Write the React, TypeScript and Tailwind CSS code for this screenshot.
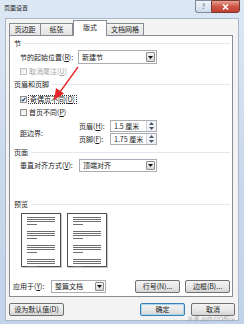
import React from 'react';

const DownArrow = () => (
  <svg width="5" height="3" viewBox="0 0 5 3">
    <path d="M0 0h5L2.5 3z" fill="#111" />
  </svg>
);

const UpArrow = () => (
  <svg width="5" height="3" viewBox="0 0 5 3">
    <path d="M0 3h5L2.5 0z" fill="#4a5870" />
  </svg>
);

const Checkbox = ({ checked = false, disabled = false }: { checked?: boolean; disabled?: boolean }) => (
  <span
    className={`flex h-[7px] w-[7px] shrink-0 items-center justify-center border bg-gradient-to-br from-[#e6e6e6] to-white ${
      disabled ? 'border-[#c2c2c2]' : 'border-[#8e8f8f]'
    }`}
  >
    {checked && (
      <svg width="5" height="5" viewBox="0 0 5 5">
        <path d="M0.6 2.6 L1.9 3.9 L4.4 0.8" stroke="#21427a" strokeWidth="1.1" fill="none" />
      </svg>
    )}
  </span>
);

const SectionHeader = ({ label }: { label: string }) => (
  <div className="flex h-[9px] items-center gap-[3px] pl-[4px] pr-[2px]">
    <span>{label}</span>
    <div className="h-px flex-1 bg-[#e2e8ef]" />
  </div>
);

const ComboBox = ({ value, className }: { value: string; className: string }) => (
  <div className={`flex border border-[#abadb3] bg-white ${className}`}>
    <span className="flex flex-1 items-center pl-[3px]">{value}</span>
    <span className="m-px flex w-[9px] items-center justify-center rounded-[1px] border border-[#8c8c8c] bg-gradient-to-b from-[#f4f4f4] to-[#d8d8d8]">
      <DownArrow />
    </span>
  </div>
);

const SpinBox = ({ value }: { value: string }) => (
  <div className="flex h-[12px] w-[47px] border border-[#abadb3] bg-white">
    <span className="flex flex-1 items-center pl-[3px]">{value}</span>
    <span className="flex w-[10px] flex-col border-l border-[#d0d4da]">
      <span className="flex flex-1 items-center justify-center bg-[#f3f5f8]">
        <UpArrow />
      </span>
      <span className="flex flex-1 items-center justify-center bg-[#eef1f5]">
        <svg width="5" height="3" viewBox="0 0 5 3">
          <path d="M0 0h5L2.5 3z" fill="#4a5870" />
        </svg>
      </span>
    </span>
  </div>
);

const Button = ({ label, className }: { label: string; className: string }) => (
  <div
    className={`flex h-[13px] items-center justify-center rounded-[2px] border bg-gradient-to-b from-[#f3f3f3] via-[#e9e9e9] to-[#d6d6d6] ${className}`}
  >
    {label}
  </div>
);

const PreviewPage = () => (
  <div className="flex h-[54px] w-[40px] flex-col gap-[6px] border border-[#505050] bg-white pl-[5px] pt-[3px] shadow-[1px_1px_0_#c8c8c8]">
    {[0, 1, 2, 3].map((g) => (
      <div key={g} className="flex flex-col gap-[1px]">
        <div className="h-px w-[28px] bg-[#6e6e6e]" />
        <div className="h-px w-[28px] bg-[#6e6e6e]" />
        <div className="h-px w-[28px] bg-[#6e6e6e]" />
        <div className="mt-[1px] h-px w-[10px] bg-[#6e6e6e]" />
      </div>
    ))}
  </div>
);

const Tab = ({ label, className }: { label: string; className: string }) => (
  <div
    className={`flex h-[12px] items-center justify-center border border-b-0 border-[#898c95] bg-gradient-to-b from-[#f4f4f4] to-[#e3e3e3] ${className}`}
  >
    {label}
  </div>
);

export default function App() {
  return (
    <div className="relative flex h-[324px] w-[244px] flex-col bg-gradient-to-b from-[#dde8f5] via-[#cad9ec] to-[#c1d3ea] font-['Noto_Sans_CJK_SC','Noto_Sans',sans-serif] text-[7px] leading-none text-[#1b1b1b]">
      {/* title bar */}
      <div className="flex h-[18px] items-start justify-between">
        <span className="pl-[4px] pt-[5px] text-[6px] text-[#222]">页面设置</span>
        <div className="mr-[4px] flex h-[13px]">
          <div className="flex w-[16px] items-center justify-center rounded-bl-[3px] border border-r-0 border-[#7c8ba0] bg-gradient-to-b from-[#f0f4f9] to-[#cfdbe9] text-[7px] text-[#4d5d73]">
            ?
          </div>
          <div className="flex w-[29px] items-center justify-center rounded-br-[3px] border border-[#7a3a33] bg-gradient-to-b from-[#e7a197] via-[#cf5545] to-[#c2412f]">
            <svg width="7" height="6" viewBox="0 0 7 6">
              <path d="M1 0.5 L6 5.5 M6 0.5 L1 5.5" stroke="#fff" strokeWidth="1.6" />
            </svg>
          </div>
        </div>
      </div>

      {/* dialog body */}
      <div className="mb-[3px] ml-[5px] mr-[5px] flex flex-1 flex-col border border-[#a9b7c9] bg-[#f3f3f3] pl-[3px] pr-[5px]">
        {/* tabs */}
        <div className="flex h-[16px] items-end">
          <Tab label="页边距" className="w-[32px]" />
          <Tab label="纸张" className="w-[32px] border-l-0" />
          <div className="relative z-10 -mb-px flex h-[16px] w-[34px] items-center justify-center border border-b-0 border-[#898c95] bg-white pb-[2px]">
            版式
          </div>
          <Tab label="文档网格" className="w-[37px] border-l-0" />
        </div>

        {/* tab page */}
        <div className="flex h-[262px] w-[224px] flex-col border border-[#898c95] bg-white">
          <div className="mt-[3px]">
            <SectionHeader label="节" />
          </div>
          <div className="mt-[2px] flex h-[14px] items-center pl-[10px]">
            <span className="w-[58px]">节的起始位置(<u>R</u>):</span>
            <ComboBox value="新建节" className="h-[14px] w-[79px]" />
          </div>
          <div className="mt-[3px] flex h-[8px] items-center gap-[2px] pl-[10px] text-[#a3a3a3]">
            <Checkbox disabled />
            <span>取消尾注(<u>U</u>)</span>
          </div>

          <div className="mt-[5px]">
            <SectionHeader label="页眉和页脚" />
          </div>
          <div className="mt-[6px] flex h-[8px] items-center gap-[1px] pl-[10px]">
            <Checkbox checked />
            <span className="flex h-[9px] items-center border border-dotted border-[#333] px-px">
              奇偶页不同(<u>O</u>)
            </span>
          </div>
          <div className="mt-[5px] flex h-[8px] items-center gap-[2px] pl-[10px]">
            <Checkbox />
            <span>首页不同(<u>P</u>)</span>
          </div>
          <div className="mt-[4px] flex items-center pl-[10px]">
            <span className="w-[59px] pt-[2px]">距边界:</span>
            <div className="flex flex-col gap-[1px]">
              <div className="flex items-center">
                <span className="w-[31px]">页眉(<u>H</u>):</span>
                <SpinBox value="1.5 厘米" />
              </div>
              <div className="flex items-center">
                <span className="w-[31px]">页脚(<u>F</u>):</span>
                <SpinBox value="1.75 厘米" />
              </div>
            </div>
          </div>

          <div className="mt-[3px]">
            <SectionHeader label="页面" />
          </div>
          <div className="mt-[2px] flex h-[13px] items-center pl-[10px]">
            <span className="w-[59px]">垂直对齐方式(<u>V</u>):</span>
            <ComboBox value="顶端对齐" className="h-[13px] w-[78px]" />
          </div>

          <div className="mt-[28px]">
            <SectionHeader label="预览" />
          </div>
          <div className="mt-[4px] flex gap-[6px] pl-[11px]">
            <PreviewPage />
            <PreviewPage />
          </div>

          <div className="mt-[13px] flex h-[13px] items-center pl-[3px] pr-[2px]">
            <span className="w-[38px]">应用于(<u>Y</u>):</span>
            <ComboBox value="整篇文档" className="h-[13px] w-[55px]" />
            <Button label="行号(N)..." className="ml-auto w-[45px] border-[#707070]" />
            <Button label="边框(B)..." className="ml-[5px] w-[45px] border-[#707070]" />
          </div>
        </div>

        {/* dialog buttons */}
        <div className="mt-[6px] flex -mr-[2px]">
          <Button label="设为默认值(D)" className="w-[55px] border-[#707070]" />
          <Button label="确定" className="ml-auto w-[45px] border-[#3c7fb1] shadow-[inset_0_0_0_1px_#a8d8f0]" />
          <Button label="取消" className="ml-[6px] w-[44px] border-[#707070]" />
        </div>
      </div>

      {/* annotation arrow */}
      <svg className="pointer-events-none absolute left-0 top-0" width="244" height="324" viewBox="0 0 244 324">
        <path d="M78 67 L60 92" stroke="#e5262a" strokeWidth="1.3" fill="none" />
        <path d="M54 100 L56 88 L64 93.5 Z" fill="#e5262a" />
      </svg>

      {/* watermark */}
      <span className="pointer-events-none absolute left-[187px] top-[316px] text-[6px] italic text-[#9a9a9a] opacity-80">
        头条 @办公Office
      </span>
    </div>
  );
}
